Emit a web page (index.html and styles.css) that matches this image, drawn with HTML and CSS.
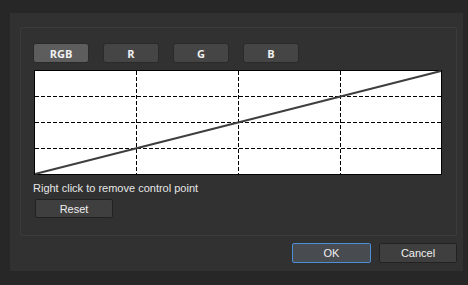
FILE: index.html
```html
<!DOCTYPE html>
<html lang="en">
<head>
    <meta charset="UTF-8">
    <meta name="viewport" content="width=device-width, initial-scale=1.0">
    <link rel="stylesheet" href="styles.css">
    <title>Curves</title>
</head>
<body>
    <div class="dialog">
        <!-- Curve group -->
        <div class="group-box">
            <div class="channel-row">
                <button class="channel-button active">RGB</button>
                <button class="channel-button">R</button>
                <button class="channel-button">G</button>
                <button class="channel-button">B</button>
            </div>

            <div class="curve-area">
                <svg width="408" height="105" viewBox="0 0 408 105">
                    <rect x="0.5" y="0.5" width="407" height="104" fill="#fff" stroke="#000"/>
                    <g stroke="#000" stroke-width="1" stroke-dasharray="4 2">
                        <line x1="102.5" y1="1" x2="102.5" y2="104"/>
                        <line x1="204.5" y1="1" x2="204.5" y2="104"/>
                        <line x1="306.5" y1="1" x2="306.5" y2="104"/>
                        <line x1="1" y1="26.5" x2="407" y2="26.5"/>
                        <line x1="1" y1="52.5" x2="407" y2="52.5"/>
                        <line x1="1" y1="78.5" x2="407" y2="78.5"/>
                    </g>
                    <line x1="1" y1="104" x2="407" y2="1" stroke="#3e3e3e" stroke-width="2"/>
                </svg>
            </div>

            <p class="hint">Right click to remove control point</p>
            <button class="push-button reset-button">Reset</button>
        </div>

        <!-- Dialog buttons -->
        <div class="dialog-buttons">
            <button class="push-button default">OK</button>
            <button class="push-button">Cancel</button>
        </div>
    </div>
</body>
</html>
```

FILE: styles.css
```css
/* Page */
body {
    margin: 0;
    padding: 0;
    background-color: #272727;
    font-family: "Liberation Sans", Arial, sans-serif;
    font-size: 11px;
    color: #e6e6e6;
}

/* Dialog panel */
.dialog {
    box-sizing: border-box;
    width: 453px;
    height: 258px;
    margin: 13px 0 0 10px;
    padding: 14px 6px 0 10px;
    background-color: #313131;
}

/* Group box */
.group-box {
    box-sizing: border-box;
    width: 437px;
    height: 209px;
    padding: 15px 12px 0 12px;
    border: 1px solid #3b3b3b;
    border-radius: 2px;
}

/* Channel buttons */
.channel-row {
    display: flex;
    gap: 14px;
}

.channel-button {
    box-sizing: border-box;
    width: 56px;
    height: 20px;
    padding: 0;
    background-color: #454545;
    border: 1px solid #2a2a2a;
    border-radius: 3px;
    color: #f0f0f0;
    font-family: "Open Sans", sans-serif;
    font-size: 11px;
    font-weight: bold;
}

.channel-button.active {
    background-color: #5d5d5d;
}

/* Curve canvas */
.curve-area {
    margin: 7px 0 0 1px;
    height: 105px;
}

.curve-area svg {
    display: block;
}

/* Hint text */
.hint {
    margin: 6px 0 0 0;
    line-height: 14px;
}

/* Push buttons */
.push-button {
    box-sizing: border-box;
    width: 78px;
    height: 20px;
    padding: 0;
    background-color: #3f3f3f;
    border: 1px solid #222;
    border-radius: 2px;
    color: #f0f0f0;
    font-family: "Liberation Sans", Arial, sans-serif;
    font-size: 11px;
}

.reset-button {
    display: block;
    height: 19px;
    margin: 4px 0 0 2px;
}

.push-button.default {
    width: 79px;
    background-color: #484b50;
    border-color: #4d8fd6;
}

/* Bottom row */
.dialog-buttons {
    display: flex;
    justify-content: flex-end;
    gap: 8px;
    margin-top: 7px;
}
```
